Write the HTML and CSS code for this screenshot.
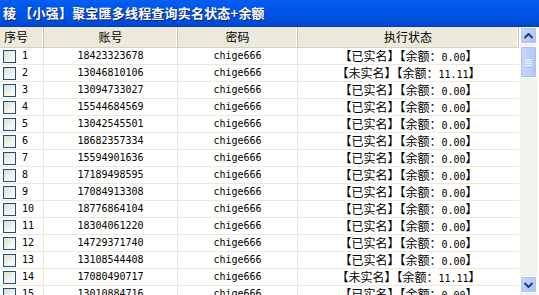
FILE: index.html
```html
<!DOCTYPE html>
<html>
<head>
<meta charset="utf-8">
<link rel="stylesheet" href="styles.css">
</head>
<body>
<div class="win">
  <div class="titlebar"><span class="ico">稜</span> 【小强】聚宝匯多线程查询实名状态+余额</div>
  <div class="body">
    <div class="list">
      <div class="hdr">
        <div class="c c1 h">序号</div>
        <div class="c c2 h">账号</div>
        <div class="c c3 h">密码</div>
        <div class="c c4 h">执行状态</div>
      </div>
      <div class="rows" id="rows">
        <div class="row"><div class="c c1"><span class="cb"></span><span class="n">1</span></div><div class="c c2 m">18423323678</div><div class="c c3 m">chige666</div><div class="c c4">【已实名】【余额：<span class="m">0.00</span>】</div></div>
        <div class="row"><div class="c c1"><span class="cb"></span><span class="n">2</span></div><div class="c c2 m">13046810106</div><div class="c c3 m">chige666</div><div class="c c4">【未实名】【余额：<span class="m">11.11</span>】</div></div>
        <div class="row"><div class="c c1"><span class="cb"></span><span class="n">3</span></div><div class="c c2 m">13094733027</div><div class="c c3 m">chige666</div><div class="c c4">【已实名】【余额：<span class="m">0.00</span>】</div></div>
        <div class="row"><div class="c c1"><span class="cb"></span><span class="n">4</span></div><div class="c c2 m">15544684569</div><div class="c c3 m">chige666</div><div class="c c4">【已实名】【余额：<span class="m">0.00</span>】</div></div>
        <div class="row"><div class="c c1"><span class="cb"></span><span class="n">5</span></div><div class="c c2 m">13042545501</div><div class="c c3 m">chige666</div><div class="c c4">【已实名】【余额：<span class="m">0.00</span>】</div></div>
        <div class="row"><div class="c c1"><span class="cb"></span><span class="n">6</span></div><div class="c c2 m">18682357334</div><div class="c c3 m">chige666</div><div class="c c4">【已实名】【余额：<span class="m">0.00</span>】</div></div>
        <div class="row"><div class="c c1"><span class="cb"></span><span class="n">7</span></div><div class="c c2 m">15594901636</div><div class="c c3 m">chige666</div><div class="c c4">【已实名】【余额：<span class="m">0.00</span>】</div></div>
        <div class="row"><div class="c c1"><span class="cb"></span><span class="n">8</span></div><div class="c c2 m">17189498595</div><div class="c c3 m">chige666</div><div class="c c4">【已实名】【余额：<span class="m">0.00</span>】</div></div>
        <div class="row"><div class="c c1"><span class="cb"></span><span class="n">9</span></div><div class="c c2 m">17084913308</div><div class="c c3 m">chige666</div><div class="c c4">【已实名】【余额：<span class="m">0.00</span>】</div></div>
        <div class="row"><div class="c c1"><span class="cb"></span><span class="n">10</span></div><div class="c c2 m">18776864104</div><div class="c c3 m">chige666</div><div class="c c4">【已实名】【余额：<span class="m">0.00</span>】</div></div>
        <div class="row"><div class="c c1"><span class="cb"></span><span class="n">11</span></div><div class="c c2 m">18304061220</div><div class="c c3 m">chige666</div><div class="c c4">【已实名】【余额：<span class="m">0.00</span>】</div></div>
        <div class="row"><div class="c c1"><span class="cb"></span><span class="n">12</span></div><div class="c c2 m">14729371740</div><div class="c c3 m">chige666</div><div class="c c4">【已实名】【余额：<span class="m">0.00</span>】</div></div>
        <div class="row"><div class="c c1"><span class="cb"></span><span class="n">13</span></div><div class="c c2 m">13108544408</div><div class="c c3 m">chige666</div><div class="c c4">【已实名】【余额：<span class="m">0.00</span>】</div></div>
        <div class="row"><div class="c c1"><span class="cb"></span><span class="n">14</span></div><div class="c c2 m">17080490717</div><div class="c c3 m">chige666</div><div class="c c4">【未实名】【余额：<span class="m">11.11</span>】</div></div>
        <div class="row"><div class="c c1"><span class="cb"></span><span class="n">15</span></div><div class="c c2 m">13010884716</div><div class="c c3 m">chige666</div><div class="c c4">【已实名】【余额：<span class="m">0.00</span>】</div></div>
      </div>
    </div>
    <div class="sb">
      <div class="sbtn"><svg width="9" height="6" viewBox="0 0 9 6"><path d="M0.5 5 L4.5 1 L8.5 5" fill="none" stroke="#1d3c82" stroke-width="2"/></svg></div>
      <div class="track">
        <div class="thumb"><svg width="7" height="7" viewBox="0 0 7 7"><path d="M0 0.5H7M0 2.5H7M0 4.5H7M0 6.5H7" stroke="#eef3ff" stroke-width="1"/></svg></div>
      </div>
      <div class="sbtn down"><svg width="9" height="6" viewBox="0 0 9 6"><path d="M0.5 1 L4.5 5 L8.5 1" fill="none" stroke="#1d3c82" stroke-width="2"/></svg></div>
    </div>
  </div>
</div>
</body>
</html>
```
FILE: styles.css
```css
html, body { margin: 0; padding: 0; background: #fff; overflow: hidden; }
body { width: 539px; height: 295px; font-family: "Noto Sans CJK SC", "Noto Sans", sans-serif; font-size: 12px; color: #000; }
.win { display: flex; flex-direction: column; height: 295px; }
.titlebar {
  height: 27px; flex: none; box-sizing: border-box;
  background: linear-gradient(#0a5ef0 0%, #0058ee 20%, #0054e3 60%, #0048d0 100%);
  border-bottom: 1px solid #0b3a9e;
  color: #fff; font-weight: bold; font-size: 13px; line-height: 26px; padding-left: 3px;
  white-space: nowrap; letter-spacing: 0.2px;
  text-shadow: 1px 1px 0 #0a1f73;
}
.ico { color: #fff; }
.body { display: flex; flex: 1; min-height: 0; }
.list { width: 519px; flex: none; overflow: hidden; }
.hdr { display: flex; height: 21px; background: #ebeadb; border-bottom: 1px solid #d6d2c2; box-sizing: border-box; }
.c { box-sizing: border-box; white-space: nowrap; overflow: hidden; }
.h { text-align: center; line-height: 20px; font-size: 12px; border-right: 1px solid #c7c5b2; box-shadow: inset -1px 0 0 #fff; padding-top: 0; }
.hdr .c1 { text-align: left; padding-left: 4px; }
.c1 { width: 44px; } .c2 { width: 134px; } .c3 { width: 120px; } .c4 { width: 221px; }
.hdr .c4 { border-right: 1px solid #c7c5b2; }
.row { display: flex; height: 17px; border-bottom: 1px solid #ece9d8; box-sizing: border-box; line-height: 16px; }
.row .c { border-right: 1px solid #ece9d8; text-align: center; }
.row .c4 { border-right: none; }
.row .c1 { display: flex; align-items: center; text-align: left; padding-left: 3px; }
.cb { width: 13px; height: 13px; box-sizing: border-box; border: 1px solid #1c5180; background: linear-gradient(135deg, #dcdcd4 0%, #f4f4f0 60%, #fff 100%); flex: none; }
.n { margin-left: 6px; font-family: "DejaVu Sans Mono", monospace; font-size: 10px; }
.m { font-family: "DejaVu Sans Mono", monospace; font-size: 10px; }
.row .c4 { font-size: 12px; }
.sb { width: 17px; flex: none; display: flex; flex-direction: column; background: #f3f1ec; margin-left: 1px; }
.sbtn { height: 17px; flex: none; box-sizing: border-box; border: 1px solid #fff; border-radius: 2px; background: linear-gradient(135deg, #c7d7fb, #b7cbf8 60%, #a5bdf4); display: flex; align-items: center; justify-content: center; box-shadow: inset 0 0 0 1px #b0c4f0; }
.track { flex: 1; padding-top: 2px; }
.thumb { height: 32px; box-sizing: border-box; border: 1px solid #fff; border-radius: 2px; background: linear-gradient(90deg, #c9d8fc, #bccff9 50%, #b3c8f6); box-shadow: inset 0 0 0 1px #a9bff3; display: flex; align-items: center; justify-content: center; }
.down { margin-bottom: 2px; }
```
